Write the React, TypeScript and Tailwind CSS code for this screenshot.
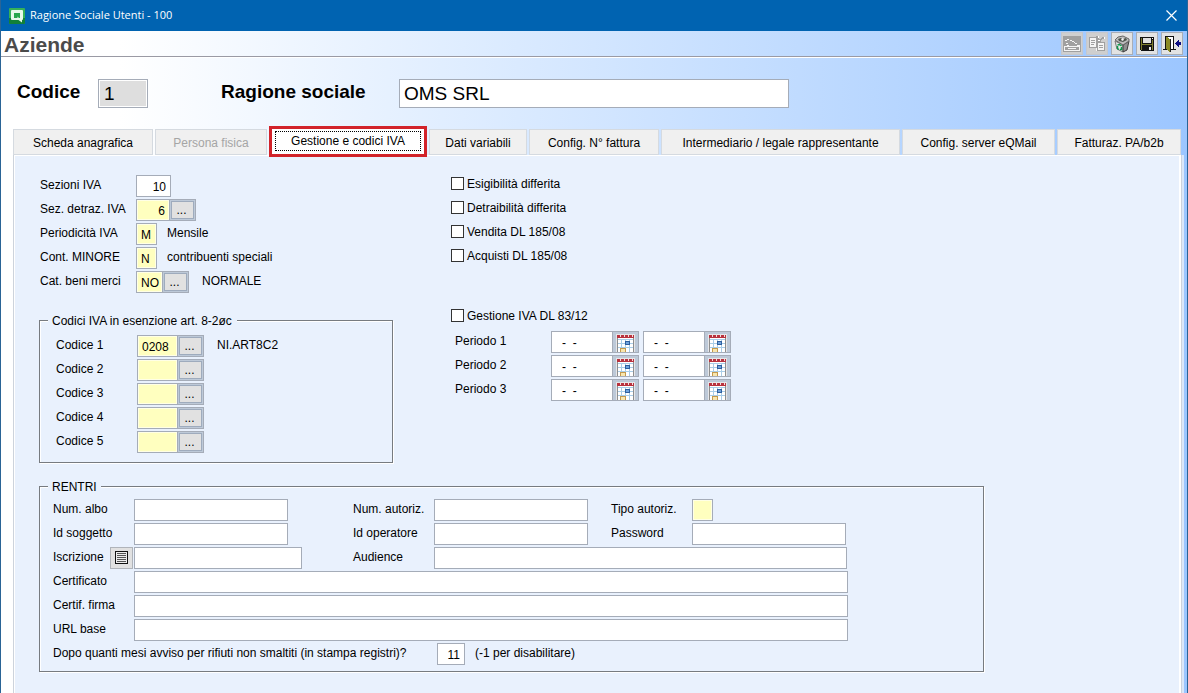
import React, { useState } from 'react';

interface Tab {
  label: string;
  size: string;
  disabled?: boolean;
}

const tabs: Tab[] = [
  { label: 'Scheda anagrafica', size: 'basis-[140px]' },
  { label: 'Persona fisica', size: 'basis-[112px]', disabled: true },
  { label: 'Gestione e codici IVA', size: 'basis-[158px]' },
  { label: 'Dati variabili', size: 'basis-[98px]' },
  { label: 'Config. N° fattura', size: 'basis-[130px]' },
  { label: 'Intermediario / legale rappresentante', size: 'basis-[239px]' },
  { label: 'Config. server eQMail', size: 'basis-[153px]' },
  { label: 'Fatturaz. PA/b2b', size: 'basis-[124px]' },
];

const field = 'h-[22px] border border-[#a5acb8] px-1 pt-[2px] leading-4 outline-none';

interface FieldProps {
  id: string;
  value?: string;
  className?: string;
  yellow?: boolean;
  type?: string;
}

const Field: React.FC<FieldProps> = ({ id, value = '', className = '', yellow, type = 'text' }) => (
  <input
    id={id}
    type={type}
    defaultValue={value}
    className={`${field} ${yellow ? 'bg-[#ffffbf] shadow-[inset_0_0_0_1px_#ffffe6]' : 'bg-white'} ${className}`}
  />
);

const Label: React.FC<{ htmlFor: string; className: string; children: React.ReactNode }> = ({ htmlFor, className, children }) => (
  <label htmlFor={htmlFor} className={`shrink-0 whitespace-nowrap leading-5 ${className}`}>
    {children}
  </label>
);

const LookupButton: React.FC<{ label: string }> = ({ label }) => (
  <button
    type="button"
    aria-label={label}
    className="-ml-px h-[22px] w-[27px] shrink-0 border border-[#a5acb8] bg-[#bdc9d8] p-px"
  >
    <span className="block h-[18px] border border-[#9eabbd] bg-[#e1e1e1] pr-[2px] leading-4">...</span>
  </button>
);

const CalendarIcon = () => (
  <svg width="19" height="18" viewBox="0 0 19 18" shapeRendering="crispEdges">
    <rect width="19" height="18" fill="#e6e6e8" />
    <path d="M2 4h15v14H2z" fill="#fff" />
    <path d="M2 5.500h15M2 9.500h15M2 13.500h15M5.500 5v13M9.500 5v13M13.500 5v13" stroke="#a9cde8" fill="none" />
    <path d="M1.500 4v14M17.500 4v14" stroke="#8d8d8d" />
    <rect x="1" y="1" width="17" height="3" fill="#b8323e" />
    <path d="M4 1h1v2H4zM8 1h1v2H8zM12 1h1v2h-1zM16 1h1v2h-1z" fill="#f3dcdc" />
    <rect x="9" y="7" width="5" height="4" fill="#2f5f9f" />
    <rect x="10" y="8" width="3" height="2" fill="#6fa3db" />
    <path d="M4 14h6v4H4z" fill="#c59a4c" />
    <path d="M5 15h4v3H5z" fill="#f8e6ae" />
  </svg>
);

const DateField: React.FC<{ id: string; label: string }> = ({ id, label }) => (
  <div className="flex">
    <input id={id} aria-label={label} defaultValue="-  -" className={`${field} w-[62px] bg-white pl-[10px]`} />
    <button
      type="button"
      aria-label={`Calendario ${label}`}
      className="-ml-px flex h-[22px] w-[27px] items-end border border-[#a5acb8] bg-[#bdc9d8] pl-[3px]"
    >
      <CalendarIcon />
    </button>
  </div>
);

const Check: React.FC<{ id: string; label: string }> = ({ id, label }) => (
  <div className="flex h-[22px] items-start">
    <input
      id={id}
      type="checkbox"
      className="mt-[2px] h-[13px] w-[13px] appearance-none border border-[#333] bg-white checked:bg-[#333]"
    />
    <label htmlFor={id} className="ml-[3px] leading-[18px]">{label}</label>
  </div>
);

const LogoIcon = () => (
  <svg width="16" height="16" viewBox="0 0 16 16">
    <rect width="16" height="16" rx="1" fill="#35b058" />
    <path d="M0 10h16v5a1 1 0 0 1-1 1H1a1 1 0 0 1-1-1z" fill="#128038" />
    <path d="M3 2h10a1 1 0 0 1 1 1v8a1 1 0 0 1-1 1v2.500L9.500 12H3a1 1 0 0 1-1-1V3a1 1 0 0 1 1-1z" fill="#e6f8e9" />
    <path d="M5 5h6v5h-1L8.500 8.500V10H5z" fill="#27a64c" />
  </svg>
);

// Toolbar glyphs, 18x18 pixel grid
const CardIcon = () => (
  <svg width="18" height="18" viewBox="0 0 18 18" shapeRendering="crispEdges">
    <path d="M0 1h18v16H0z" fill="#a0a0a0" />
    <path d="M1 11h3v-1h2v1h8v-1h3v6H1z" fill="#f4f4f4" />
    <path d="M2 12h14v3H2z" fill="#a0a0a0" />
    <path d="M5 13h8v1H5zM2 5h2v1H2zM4 4h2v1H4zM7 5h2v1H7zM9 6h2v1H9zM11 7h1v1h-1zM12 8h2v1h-2zM3 8h2v1H3z" fill="#f4f4f4" />
  </svg>
);

const CopyIcon = () => (
  <svg width="18" height="18" viewBox="0 0 18 18" shapeRendering="crispEdges">
    <path d="M1 2h8v11H1zM8 7h8v9H8z" fill="#f4f4f4" />
    <path d="M1.500 2.500H8v10H1.500zM9.500 7.500h7v8h-7z" fill="none" stroke="#a0a0a0" />
    <path d="M3 5.500h4M3 7.500h4M3 9.500h3M11 10.500h4M11 12.500h4" fill="none" stroke="#a0a0a0" />
    <path d="M8 1h2v2h1v1h2V3h1V2h2v2h-2v1h-1v2H9V5H8z" fill="#a0a0a0" />
    <path d="M10 1h1v2h-1zM16 2h1v2h-1zM10 5h2v1h-2z" fill="#fff" />
  </svg>
);

const BinIcon = () => (
  <svg width="18" height="18" viewBox="0 0 18 18">
    <path d="M2 6l8 4v7l-6-3z" fill="#e9e9e9" stroke="#777" />
    <path d="M10 10l6-4-2 9-4 2z" fill="#8f8f8f" stroke="#3c3c3c" />
    <path d="M2 5l3-3 5-1 6 3v2l-6 4z" fill="#bcbcbc" stroke="#666" />
    <path d="M5 4l3-1 2 1 3-1 1 2-4 2-4-1z" fill="#4d554d" />
    <path d="M8 4l2-1 1 2-2 1z" fill="#f3f3f3" />
    <path d="M4.500 10l2-.5 2 1.500M4.500 11v2.500l1.500 1M8.500 12v2.500H7" fill="none" stroke="#10964b" strokeWidth="1.500" />
  </svg>
);

const SaveIcon = () => (
  <svg width="18" height="18" viewBox="0 0 18 18" shapeRendering="crispEdges">
    <path d="M2 2h14v14H3v-1H2z" fill="#111" />
    <path d="M3 3h1v12H3zM14 5h1v10h-1zM4 9h10v1H4z" fill="#7c7c2d" />
    <path d="M5 3h8v5H5z" fill="#dfdfdf" />
    <path d="M14 3h1v1h-1z" fill="#fff" />
    <path d="M11 12h2v3h-2z" fill="#e8e8e8" />
  </svg>
);

const ExitIcon = () => (
  <svg width="18" height="18" viewBox="0 0 18 18" shapeRendering="crispEdges">
    <path d="M2 1h9v14H2z" fill="#111" />
    <path d="M3 2h7v12H3z" fill="#fff" />
    <path d="M0 14h3v1H0zM10 14h3v1h-3z" fill="#111" />
    <path d="M3 2h1l3 3v12H6l-3-3z" fill="#8b8a24" />
    <path d="M7 4h1v13H7z" fill="#222" />
    <path d="M12 8h1V7h1V6h1V5h1v2h2v3h-2v2h-1v-1h-1v-1h-1V9h-1z" fill="#0d0d82" />
  </svg>
);

const tools = [
  { label: 'Scheda', icon: <CardIcon />, disabled: true },
  { label: 'Copia', icon: <CopyIcon />, disabled: true },
  { label: 'Elimina', icon: <BinIcon /> },
  { label: 'Salva', icon: <SaveIcon /> },
  { label: 'Esci', icon: <ExitIcon /> },
];

const groupBox = 'border border-[#777b80] shadow-[1px_1px_0_#fff,inset_1px_1px_0_#fff]';

export default function App() {
  const [active, setActive] = useState<number>(2);

  return (
    <div className="flex min-h-screen flex-col border-x border-[#2a6496] bg-linear-to-r from-white from-10% to-[#9cc6ff] font-['Liberation_Sans',Arial,sans-serif] text-[12px] text-black">
      <header className="flex h-[31px] items-center bg-[#0063b1] pl-2 pr-[10px] text-white">
        <LogoIcon />
        <h1 className="ml-[5px] font-['Open_Sans','Noto_Sans',sans-serif] text-[11px]">Ragione Sociale Utenti - 100</h1>
        <button type="button" aria-label="Chiudi" className="ml-auto">
          <svg width="11" height="11" viewBox="0 0 11 11" stroke="#fff" strokeWidth="1.200">
            <path d="M.5.5l10 10M10.500.5l-10 10" />
          </svg>
        </button>
      </header>

      <div className="flex h-[26px] items-center border-b border-[#9a9aa4] pl-[3px] pr-1 shadow-[0_1px_0_#fff]">
        <h2 className="pt-[2px] text-[21px] font-bold leading-6 text-[#4b4b4b]">Aziende</h2>
        <div className="ml-auto flex gap-[3px]">
          {tools.map((tool) => (
            <button
              key={tool.label}
              type="button"
              aria-label={tool.label}
              disabled={tool.disabled}
              className="flex h-[23px] w-[22px] items-center justify-center border border-[#a9aeb6] bg-[#e3e3e3] disabled:border-[#c4c8cf] disabled:bg-[#cfcfcf]"
            >
              {tool.icon}
            </button>
          ))}
        </div>
      </div>

      <div className="flex items-center pl-4 pt-[21px] text-[19px]">
        <label htmlFor="codice" className="w-[81px] pb-[2px] font-bold">Codice</label>
        <input
          id="codice"
          readOnly
          defaultValue="1"
          className="h-[29px] w-[50px] border border-[#a5acb8] bg-[#dedede] px-[5px] pt-[2px] shadow-[inset_0_0_0_1px_#fff] outline-none"
        />
        <label htmlFor="ragione" className="ml-[73px] w-[178px] pb-[2px] font-bold">Ragione sociale</label>
        <input
          id="ragione"
          defaultValue="OMS SRL"
          className="h-[29px] w-[390px] border border-[#a5acb8] bg-white px-1 pt-[2px] outline-none"
        />
      </div>

      <div role="tablist" className="ml-3 mr-[6px] mt-5 flex h-[26px] gap-[2px]">
        {tabs.map((tab, i) => (
          <button
            key={tab.label}
            type="button"
            role="tab"
            aria-selected={i === active}
            disabled={tab.disabled}
            onClick={() => setActive(i)}
            className={`grow whitespace-nowrap ${tab.size} ${
              i === active
                ? 'relative z-10 -mb-[2px] -mt-[3px] h-[31px] border-3 border-[#d2232a] bg-white px-[3px] py-[2px]'
                : 'h-[26px] border border-[#d5dae0] bg-[#f0f0f0] pt-[2px] disabled:text-[#a5a5a5]'
            }`}
          >
            {i === active ? (
              <span className="block h-5 border border-dotted border-black leading-[18px]">{tab.label}</span>
            ) : (
              tab.label
            )}
          </button>
        ))}
      </div>

      <main className="ml-3 mr-[3px] flex grow flex-col border-r-2 border-[#dbe8fa]">
        <div className="grow border-x border-[#cdd3dc] bg-[#e9f1fd] pb-5 pl-[26px] pt-5 shadow-[inset_1px_1px_0_#fff,inset_-2px_0_0_#fff]">
          <div className="flex">
            <div className="w-[411px] shrink-0">
              <div className="flex flex-col gap-[2px]">
                <div className="flex">
                  <Label htmlFor="sezioni" className="w-[96px]">Sezioni IVA</Label>
                  <Field id="sezioni" value="10" className="w-[35px] text-right" />
                </div>
                <div className="flex">
                  <Label htmlFor="detraz" className="w-[96px]">Sez. detraz. IVA</Label>
                  <Field id="detraz" value="6" yellow className="w-[34px] text-right" />
                  <LookupButton label="Cerca sezione" />
                </div>
                <div className="flex">
                  <Label htmlFor="periodicita" className="w-[96px]">Periodicità IVA</Label>
                  <Field id="periodicita" value="M" yellow className="w-[21px]" />
                  <span className="ml-[10px] leading-5">Mensile</span>
                </div>
                <div className="flex">
                  <Label htmlFor="minore" className="w-[96px]">Cont. MINORE</Label>
                  <Field id="minore" value="N" yellow className="w-[21px]" />
                  <span className="ml-[10px] leading-5">contribuenti speciali</span>
                </div>
                <div className="flex">
                  <Label htmlFor="merci" className="w-[96px]">Cat. beni merci</Label>
                  <Field id="merci" value="NO" yellow className="w-[27px] pr-0" />
                  <LookupButton label="Cerca categoria" />
                  <span className="ml-[13px] leading-5">NORMALE</span>
                </div>
              </div>

              <fieldset className={`-ml-px mt-5 w-[354px] pb-[9px] pl-4 ${groupBox}`}>
                <legend className="-ml-2 bg-[#e9f1fd] pl-1 pr-[5px] leading-4">Codici IVA in esenzione art. 8-2øc</legend>
                <div className="mt-[6px] flex flex-col gap-[2px]">
                  {['0208', '', '', '', ''].map((value, i) => (
                    <div key={i} className="flex">
                      <Label htmlFor={`codice-${i + 1}`} className="w-[81px]">Codice {i + 1}</Label>
                      <Field id={`codice-${i + 1}`} value={value} yellow className="w-[41px]" />
                      <LookupButton label={`Cerca codice ${i + 1}`} />
                      {value && <span className="ml-[13px] leading-5">NI.ART8C2</span>}
                    </div>
                  ))}
                </div>
              </fieldset>
            </div>

            <div>
              <div className="flex flex-col gap-[2px]">
                <Check id="esigibilita" label="Esigibilità differita" />
                <Check id="detraibilita" label="Detraibilità differita" />
                <Check id="vendita" label="Vendita DL 185/08" />
                <Check id="acquisti" label="Acquisti DL 185/08" />
              </div>
              <div className="mt-[38px]">
                <Check id="gestione" label="Gestione IVA DL 83/12" />
              </div>
              <div className="ml-1 mt-[2px] flex flex-col gap-[2px]">
                {[1, 2, 3].map((n) => (
                  <div key={n} className="flex">
                    <Label htmlFor={`dal-${n}`} className="w-[96px]">Periodo {n}</Label>
                    <div className="flex gap-1">
                      <DateField id={`dal-${n}`} label={`Periodo ${n} dal`} />
                      <DateField id={`al-${n}`} label={`Periodo ${n} al`} />
                    </div>
                  </div>
                ))}
              </div>
            </div>
          </div>

          <fieldset className={`-ml-px mt-4 w-[945px] pb-[6px] pl-[13px] ${groupBox}`}>
            <legend className="-ml-[5px] bg-[#e9f1fd] px-1 leading-4">RENTRI</legend>
            <div className="mt-1 flex flex-col gap-[2px]">
              <div className="flex">
                <Label htmlFor="albo" className="w-[81px]">Num. albo</Label>
                <Field id="albo" className="w-[154px]" />
                <Label htmlFor="autoriz" className="ml-[65px] w-[81px]">Num. autoriz.</Label>
                <Field id="autoriz" className="w-[154px]" />
                <Label htmlFor="tipo" className="ml-[23px] w-[81px]">Tipo autoriz.</Label>
                <Field id="tipo" yellow className="w-[21px]" />
              </div>
              <div className="flex">
                <Label htmlFor="soggetto" className="w-[81px]">Id soggetto</Label>
                <Field id="soggetto" className="w-[154px]" />
                <Label htmlFor="operatore" className="ml-[65px] w-[81px]">Id operatore</Label>
                <Field id="operatore" className="w-[154px]" />
                <Label htmlFor="password" className="ml-[23px] w-[81px]">Password</Label>
                <Field id="password" type="password" className="w-[154px]" />
              </div>
              <div className="flex">
                <Label htmlFor="iscrizione" className="w-[57px]">Iscrizione</Label>
                <button
                  type="button"
                  aria-label="Elenco iscrizioni"
                  className="mr-px flex h-[22px] w-[23px] items-center justify-center border border-[#b0b4ba] bg-[#e1e1e1]"
                >
                  <svg width="13" height="13" viewBox="0 0 13 13" shapeRendering="crispEdges">
                    <path d="M0 0h13v13H0z" fill="#111" />
                    <path d="M1 1h11v11H1z" fill="#ececec" />
                    <path d="M2 2.500h9M2 4.500h9M2 6.500h9M2 8.500h9M2 10.500h9" stroke="#555" />
                  </svg>
                </button>
                <Field id="iscrizione" className="w-[168px]" />
                <Label htmlFor="audience" className="ml-[51px] w-[81px]">Audience</Label>
                <Field id="audience" className="w-[413px]" />
              </div>
              <div className="flex">
                <Label htmlFor="certificato" className="w-[81px]">Certificato</Label>
                <Field id="certificato" className="w-[714px]" />
              </div>
              <div className="flex">
                <Label htmlFor="firma" className="w-[81px]">Certif. firma</Label>
                <Field id="firma" className="w-[714px]" />
              </div>
              <div className="flex">
                <Label htmlFor="url" className="w-[81px]">URL base</Label>
                <Field id="url" className="w-[714px]" />
              </div>
              <div className="flex">
                <Label htmlFor="mesi" className="w-[384px]">
                  Dopo quanti mesi avviso per rifiuti non smaltiti (in stampa registri)?
                </Label>
                <Field id="mesi" value="11" className="w-[28px] text-right" />
                <span className="ml-[10px] leading-5">(-1 per disabilitare)</span>
              </div>
            </div>
          </fieldset>
        </div>
      </main>
    </div>
  );
}
